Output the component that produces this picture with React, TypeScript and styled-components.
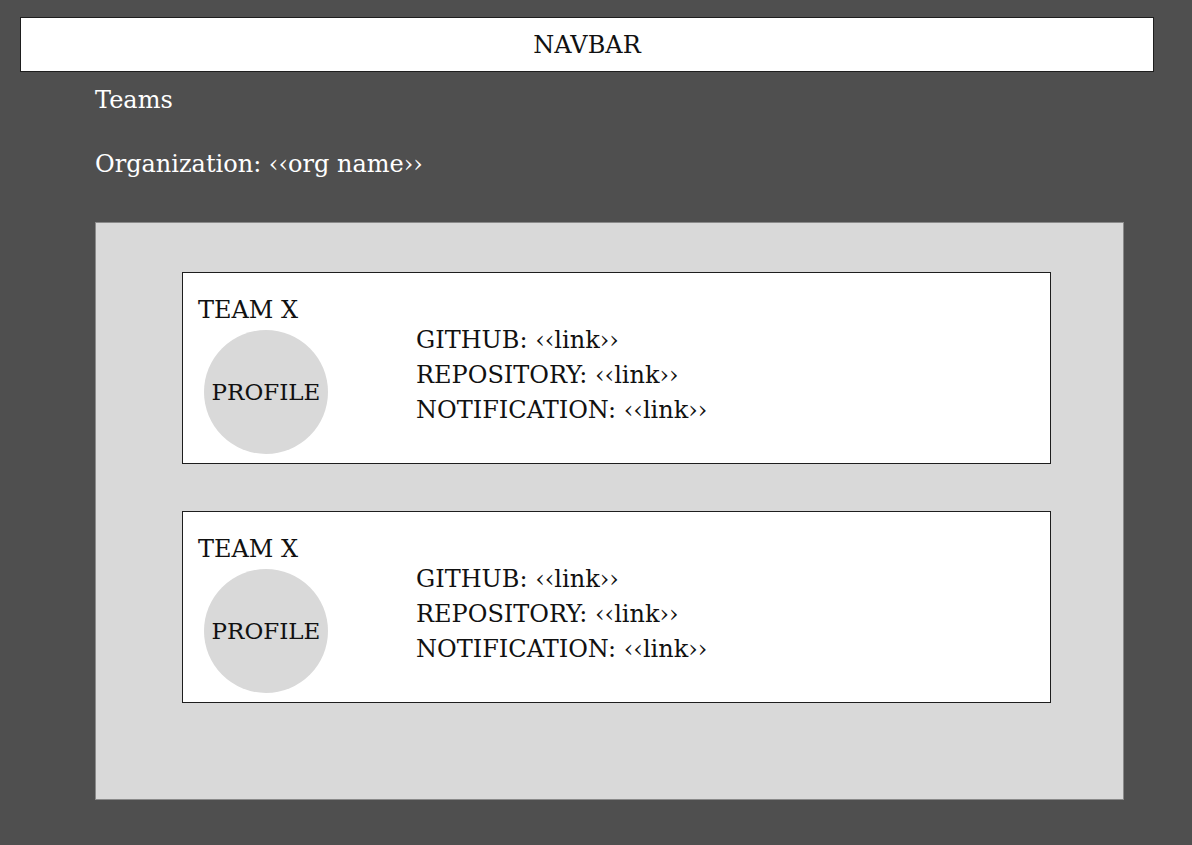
import React from 'react'
import styled, { createGlobalStyle } from 'styled-components'

const GlobalStyle = createGlobalStyle`
  html, body {
    margin: 0;
    padding: 0;
    background-color: #4f4f4f;
  }
  body {
    font-family: "DejaVu Serif", "Liberation Serif", serif;
  }
`

const Page = styled.div`
  width: 1192px;
  height: 845px;
  padding-top: 17px;
  box-sizing: border-box;
`

const Navbar = styled.div`
  margin-left: 20px;
  width: 1134px;
  height: 55px;
  box-sizing: border-box;
  background-color: #FFFFFF;
  border: 1px solid #1e1e1e;
  display: flex;
  align-items: center;
  justify-content: center;
  font-size: 24px;
  color: #111111;
`

const Main = styled.div`
  padding-left: 95px;
`

const Heading = styled.div<{ $gap: number }>`
  color: #FFFFFF;
  font-size: 24px;
  line-height: 30px;
  margin-top: ${(p) => p.$gap}px;
`

const Panel = styled.div`
  margin-top: 43px;
  width: 1029px;
  height: 578px;
  box-sizing: border-box;
  background-color: #d9d9d9;
  border: 1px solid #8a8a8a;
  padding: 49px 0 0 86px;
  display: flex;
  flex-direction: column;
  gap: 47px;
`

const Card = styled.div`
  width: 869px;
  height: 192px;
  box-sizing: border-box;
  background-color: #FFFFFF;
  border: 1px solid #1e1e1e;
  display: flex;
  color: #111111;
`

const TeamColumn = styled.div`
  width: 233px;
  padding: 22px 0 0 15px;
  box-sizing: border-box;
`

const TeamName = styled.div`
  font-size: 24px;
  line-height: 30px;
`

const Avatar = styled.div`
  margin: 5px 0 0 6px;
  width: 124px;
  height: 124px;
  border-radius: 50%;
  background-color: #d9d9d9;
  display: flex;
  align-items: center;
  justify-content: center;
  font-size: 23px;
`

const Links = styled.div`
  padding-top: 50px;
  display: flex;
  flex-direction: column;
`

const LinkRow = styled.div`
  font-size: 24px;
  line-height: 35px;
`

const teams = [
  { id: 1, name: 'TEAM X' },
  { id: 2, name: 'TEAM X' },
]

const App = () => {
  return (
    <>
      <GlobalStyle />
      <Page>
        <Navbar>NAVBAR</Navbar>
        <Main>
          <Heading $gap={13}>Teams</Heading>
          <Heading $gap={34}>Organization: ‹‹org name››</Heading>
          <Panel>
            {teams.map((team) => (
              <Card key={team.id}>
                <TeamColumn>
                  <TeamName>{team.name}</TeamName>
                  <Avatar>PROFILE</Avatar>
                </TeamColumn>
                <Links>
                  <LinkRow>GITHUB: ‹‹link››</LinkRow>
                  <LinkRow>REPOSITORY: ‹‹link››</LinkRow>
                  <LinkRow>NOTIFICATION: ‹‹link››</LinkRow>
                </Links>
              </Card>
            ))}
          </Panel>
        </Main>
      </Page>
    </>
  )
}

export default App
